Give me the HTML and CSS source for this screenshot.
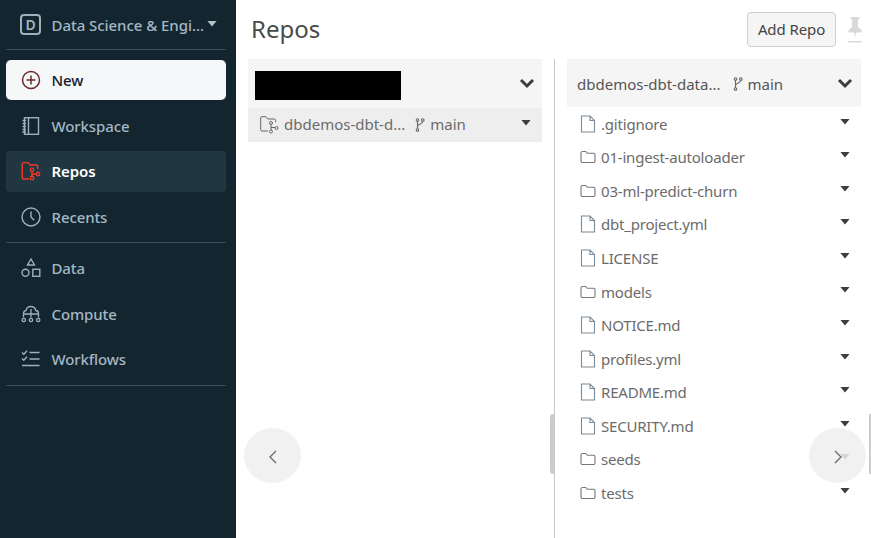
FILE: index.html
```html
<!DOCTYPE html>
<html lang="en">
<head>
<meta charset="utf-8">
<title>Repos</title>
<link rel="stylesheet" href="styles.css">
</head>
<body>
<svg class="defs" width="0" height="0" aria-hidden="true">
  <symbol id="file" viewBox="0 0 16 18"><path d="M1.500 1h8.500l4.500 4.500V17h-13zM10 1v4.500h4.500" fill="none" stroke="currentColor" stroke-width="1.100"/></symbol>
  <symbol id="folder" viewBox="0 0 16 14"><path d="M1 3a1.500 1.500 0 0 1 1.500-1.500h3.200l1.600 1.800h6.200A1.500 1.500 0 0 1 15 4.800V11a1.500 1.500 0 0 1-1.500 1.500h-11A1.500 1.500 0 0 1 1 11z" fill="none" stroke="currentColor" stroke-width="1.100"/></symbol>
  <symbol id="branch" viewBox="0 0 10 14"><g fill="none" stroke="currentColor" stroke-width="1.100"><circle cx="2.500" cy="2" r="1.300"/><circle cx="7.800" cy="2" r="1.300"/><circle cx="2.500" cy="12" r="1.300"/><path d="M2.500 3.300v7.400M7.800 3.300c0 3-5.300 2.500-5.300 5.500"/></g></symbol>
  <symbol id="caret" viewBox="0 0 12 7"><path d="M0.500 0h11L6 6.500z" fill="currentColor"/></symbol>
  <symbol id="chev" viewBox="0 0 16 11"><path d="M2 2l6 6 6-6" fill="none" stroke="currentColor" stroke-width="3"/></symbol>
</svg>
<div class="app">
  <nav class="side">
    <div class="persona">
      <span class="persona-badge">D</span>
      <span class="persona-name">Data Science &amp; Engi...</span>
      <svg class="persona-caret"><use href="#caret"/></svg>
    </div>
    <hr class="rule">
    <a class="item item-new">
      <svg class="ico" viewBox="0 0 20 20"><circle cx="10" cy="10" r="8.500" fill="none" stroke="#6b2a2a" stroke-width="1.500"/><path d="M10 5.500v9M5.500 10h9" stroke="#6b2a2a" stroke-width="1.500"/></svg>
      <span>New</span>
    </a>
    <a class="item item-work">
      <svg class="ico" viewBox="0 0 20 20"><g fill="none" stroke="currentColor" stroke-width="1.400"><rect x="3.500" y="1.700" width="14" height="16.600"/><path d="M7.500 1.700v16.600M1.500 4.500h3.500M1.500 7.500h3.500M1.500 10.500h3.500M1.500 13.500h3.500M1.500 16h3.500"/></g></svg>
      <span>Workspace</span>
    </a>
    <a class="item item-active">
      <svg class="ico" viewBox="0 0 20 20"><g fill="none" stroke="#f0382a" stroke-width="1.400"><path d="M8 18H2.500A1.200 1.200 0 0 1 1.300 16.800V2.800A1.200 1.200 0 0 1 2.500 1.600H7l2 2.400h6.500a1.200 1.200 0 0 1 1.200 1.200V8"/><circle cx="11" cy="8.800" r="1.700"/><circle cx="11" cy="17" r="1.700"/><circle cx="17" cy="13" r="1.700"/><path d="M11 10.500v4.800M11 13h4.300"/></g></svg>
      <span>Repos</span>
    </a>
    <a class="item">
      <svg class="ico" viewBox="0 0 20 20"><g fill="none" stroke="currentColor" stroke-width="1.400"><circle cx="10" cy="10" r="9"/><path d="M10 4.500V10l3.200 3.200"/></g></svg>
      <span>Recents</span>
    </a>
    <hr class="rule rule-b">
    <a class="item">
      <svg class="ico" viewBox="0 0 20 20"><g fill="none" stroke="currentColor" stroke-width="1.400"><path d="M10 1l3.500 6h-7z"/><circle cx="4.500" cy="14.800" r="3.500"/><rect x="11.800" y="11.300" width="7" height="7"/></g></svg>
      <span>Data</span>
    </a>
    <a class="item">
      <svg class="ico" viewBox="0 0 20 20"><g fill="none" stroke="currentColor" stroke-width="1.300"><path d="M2.500 13.500V9.500A3 3 0 0 1 5 6.500a5 5 0 0 1 9.800 0 3 3 0 0 1 2.700 3v4"/><path d="M10 5v8.500M3 10h14"/><circle cx="2.800" cy="16" r="1.700"/><circle cx="10" cy="16" r="1.700"/><circle cx="17.200" cy="16" r="1.700"/></g></svg>
      <span>Compute</span>
    </a>
    <a class="item">
      <svg class="ico" viewBox="0 0 20 20"><g fill="none" stroke="currentColor" stroke-width="1.400"><path d="M1 3.500l1.800 1.800L6 1.800M1 9.500l1.800 1.800L6 7.800M8.500 3.500h10M8.500 10h10M1 16.500h17.500"/></g></svg>
      <span>Workflows</span>
    </a>
    <hr class="rule rule-b">
  </nav>
  <main class="main">
    <header class="top">
      <h1 class="title">Repos</h1>
      <button class="add">Add Repo</button>
      <svg class="pin" viewBox="0 0 14 26"><path d="M2.500 0h9v2.500H10V10l3.500 3v2.500H8L7 21 6 15.500H.5V13L4 10V2.500H2.500zM0 24h14v1.500H0z" fill="#d9d9d9"/></svg>
    </header>
    <div class="cols">
      <section class="col col-left">
        <div class="col-head head-left">
          <span class="redact"></span>
          <svg class="chev"><use href="#chev"/></svg>
        </div>
        <div class="row row-sel">
          <svg class="ico-repo" viewBox="0 0 20 18"><g fill="none" stroke="#666" stroke-width="1"><path d="M8 15H2A1.300 1.300 0 0 1 .7 13.700V2A1.300 1.300 0 0 1 2 .7h4l1.800 2.300h6.500a1.300 1.300 0 0 1 1.300 1.300v2"/><circle cx="11" cy="7" r="1.500"/><circle cx="11" cy="15.500" r="1.500"/><circle cx="16.500" cy="12" r="1.500"/><path d="M11 8.500v5.500M11 11.500h4"/></g></svg>
          <span class="repo-name">dbdemos-dbt-d...</span>
          <svg class="branch"><use href="#branch"/></svg>
          <span class="branch-name">main</span>
          <svg class="caret caret-sel"><use href="#caret"/></svg>
        </div>
      </section>
      <div class="split"><span class="grip"></span></div>
      <section class="col col-right">
        <div class="col-head head-right">
          <span class="head-name">dbdemos-dbt-data...</span>
          <svg class="branch"><use href="#branch"/></svg>
          <span class="branch-name">main</span>
          <svg class="chev"><use href="#chev"/></svg>
        </div>
        <ul class="files">
          <li class="file"><svg class="fi"><use href="#file"/></svg><span>.gitignore</span><svg class="caret"><use href="#caret"/></svg></li>
          <li class="file"><svg class="fo"><use href="#folder"/></svg><span>01-ingest-autoloader</span><svg class="caret"><use href="#caret"/></svg></li>
          <li class="file"><svg class="fo"><use href="#folder"/></svg><span>03-ml-predict-churn</span><svg class="caret"><use href="#caret"/></svg></li>
          <li class="file"><svg class="fi"><use href="#file"/></svg><span>dbt_project.yml</span><svg class="caret"><use href="#caret"/></svg></li>
          <li class="file"><svg class="fi"><use href="#file"/></svg><span>LICENSE</span><svg class="caret"><use href="#caret"/></svg></li>
          <li class="file"><svg class="fo"><use href="#folder"/></svg><span>models</span><svg class="caret"><use href="#caret"/></svg></li>
          <li class="file"><svg class="fi"><use href="#file"/></svg><span>NOTICE.md</span><svg class="caret"><use href="#caret"/></svg></li>
          <li class="file"><svg class="fi"><use href="#file"/></svg><span>profiles.yml</span><svg class="caret"><use href="#caret"/></svg></li>
          <li class="file"><svg class="fi"><use href="#file"/></svg><span>README.md</span><svg class="caret"><use href="#caret"/></svg></li>
          <li class="file"><svg class="fi"><use href="#file"/></svg><span>SECURITY.md</span><svg class="caret"><use href="#caret"/></svg></li>
          <li class="file"><svg class="fo"><use href="#folder"/></svg><span>seeds</span><svg class="caret"><use href="#caret"/></svg></li>
          <li class="file"><svg class="fo"><use href="#folder"/></svg><span>tests</span><svg class="caret"><use href="#caret"/></svg></li>
        </ul>
      </section>
      <span class="edge"></span>
    </div>
    <button class="round round-l" aria-label="Previous"><svg viewBox="0 0 10 14"><path d="M8 1L2 7l6 6" fill="none" stroke="#666" stroke-width="1.300"/></svg></button>
    <button class="round round-r" aria-label="Next"><svg viewBox="0 0 10 14"><path d="M2 1l6 6-6 6" fill="none" stroke="#666" stroke-width="1.300"/></svg></button>
  </main>
</div>
</body>
</html>
```
FILE: styles.css
```css
* { box-sizing: border-box; }
html, body { margin: 0; height: 100%; overflow: hidden; }
body { font-family: "Noto Sans", "Open Sans", "Liberation Sans", sans-serif; background: #fff; }
.defs { position: absolute; }
.app { display: flex; width: 871px; height: 538px; }

.side { width: 236px; flex: none; background: #13252e; padding: 0 10px 0 6px; color: #a4b7c6; }
.persona { height: 49px; display: flex; align-items: center; padding-left: 14px; font-size: 15px; font-weight: 500; }
.persona-badge { width: 21px; height: 21px; border: 2px solid #9fb0bb; border-radius: 4px; display: flex; align-items: center; justify-content: center; font-size: 14px; font-weight: 600; margin-right: 10.500px; }
.persona-name { white-space: nowrap; letter-spacing: -0.05px; }
.persona-caret { width: 10px; height: 6px; margin: -2px 0 0 3px; color: #b4c2cc; }
.rule { margin: 0; border: 0; height: 1px; background: #3b4c55; }
.rule-b { margin-top: 4.500px; }
.item { display: flex; align-items: center; height: 41px; margin-top: 4.500px; padding: 0 0 1px 15px; border-radius: 4px; font-size: 15px; font-weight: 500; letter-spacing: -0.1px; }
.ico { width: 20px; height: 20px; margin-right: 10.500px; flex: none; color: #9fb0bb; }
.item-new { height: 40px; margin-top: 10px; padding-bottom: 0; background: #f6f7f8; color: #11222c; border-radius: 5px; }
.item-work { margin-top: 6px; }
.item-active { margin-top: 4px; background: #203742; color: #fff; font-weight: 600; }
.rule + .item:not(.item-new) { margin-top: 5px; }

.main { position: relative; flex: 1; min-width: 0; }
.top { display: flex; align-items: center; height: 59px; padding: 0 9px 0 15px; }
.title { margin: -2px auto 0 0; font-size: 24px; font-weight: 400; color: #4a4a4a; line-height: 1; }
.add { width: 89px; height: 35px; border: 1px solid #cfcfcf; border-radius: 4px; background: #f5f5f5; color: #444; font: 400 15px "Noto Sans", sans-serif; letter-spacing: -0.1px; padding: 0 0 1px; }
.pin { width: 14px; height: 26px; margin-left: 12px; }

.cols { display: flex; height: 479px; padding-left: 12px; }
.col-left { width: 294px; flex: none; }
.col-head { display: flex; align-items: center; background: #f5f5f5; }
.head-left { height: 49px; padding: 4px 7px 0; }
.redact { width: 146px; height: 29px; background: #000; }
.chev { width: 16px; height: 11px; margin-left: auto; color: #3d3d3d; }
.head-left .chev { margin-top: -4px; }
.row-sel { display: flex; align-items: center; height: 34px; background: #eee; padding: 0 12px; font-size: 15px; color: #6b6b6b; }
.row-sel span { position: relative; top: -1px; }
.ico-repo { width: 20px; height: 18px; margin-right: 4px; }
.branch { width: 10px; height: 14px; color: #666; margin-right: 5px; flex: none; }
.repo-name { margin-right: 10px; white-space: nowrap; }
.caret { width: 10px; height: 6px; color: #3d3d3d; margin-left: auto; flex: none; position: relative; top: -2px; }
.caret-sel { margin-right: -1px; }

.split { width: 25px; flex: none; position: relative; }
.split::after { content: ""; position: absolute; left: 12px; top: 0; bottom: 0; width: 1px; background: #cbcbcb; }
.grip { position: absolute; left: 8px; top: 355px; width: 4px; height: 60px; background: #ccc; border-radius: 3px 0 0 3px; }

.col-right { width: 294px; flex: none; }
.head-right { height: 48px; padding: 0 8px 0 10px; font-size: 15px; color: #555; }
.head-right span { position: relative; top: 1px; }
.head-right .branch { position: relative; top: 1px; margin-right: 4px; }
.head-name { margin-right: 13px; white-space: nowrap; }
.files { list-style: none; margin: 0; padding: 0; }
.file { display: flex; align-items: center; height: 33.550px; padding: 0 11px 0 13px; font-size: 15px; color: #6b6b6b; }
.file span { white-space: nowrap; letter-spacing: -0.2px; }
.fi { width: 16px; height: 18px; color: #7a8a96; margin-right: 5px; }
.fo { width: 16px; height: 14px; color: #777; margin-right: 5px; }
.edge { position: absolute; right: 0; top: 414px; width: 2px; height: 60px; background: #ccc; }

.round { position: absolute; top: 428px; width: 57px; height: 55px; border: 0; padding: 0; border-radius: 50%; background: rgba(238, 238, 238, 0.85); display: flex; align-items: center; justify-content: center; }
.round svg { width: 10px; height: 14px; margin-top: 3px; }
.round-l { left: 8px; }
.round-r { left: 573px; }
```
